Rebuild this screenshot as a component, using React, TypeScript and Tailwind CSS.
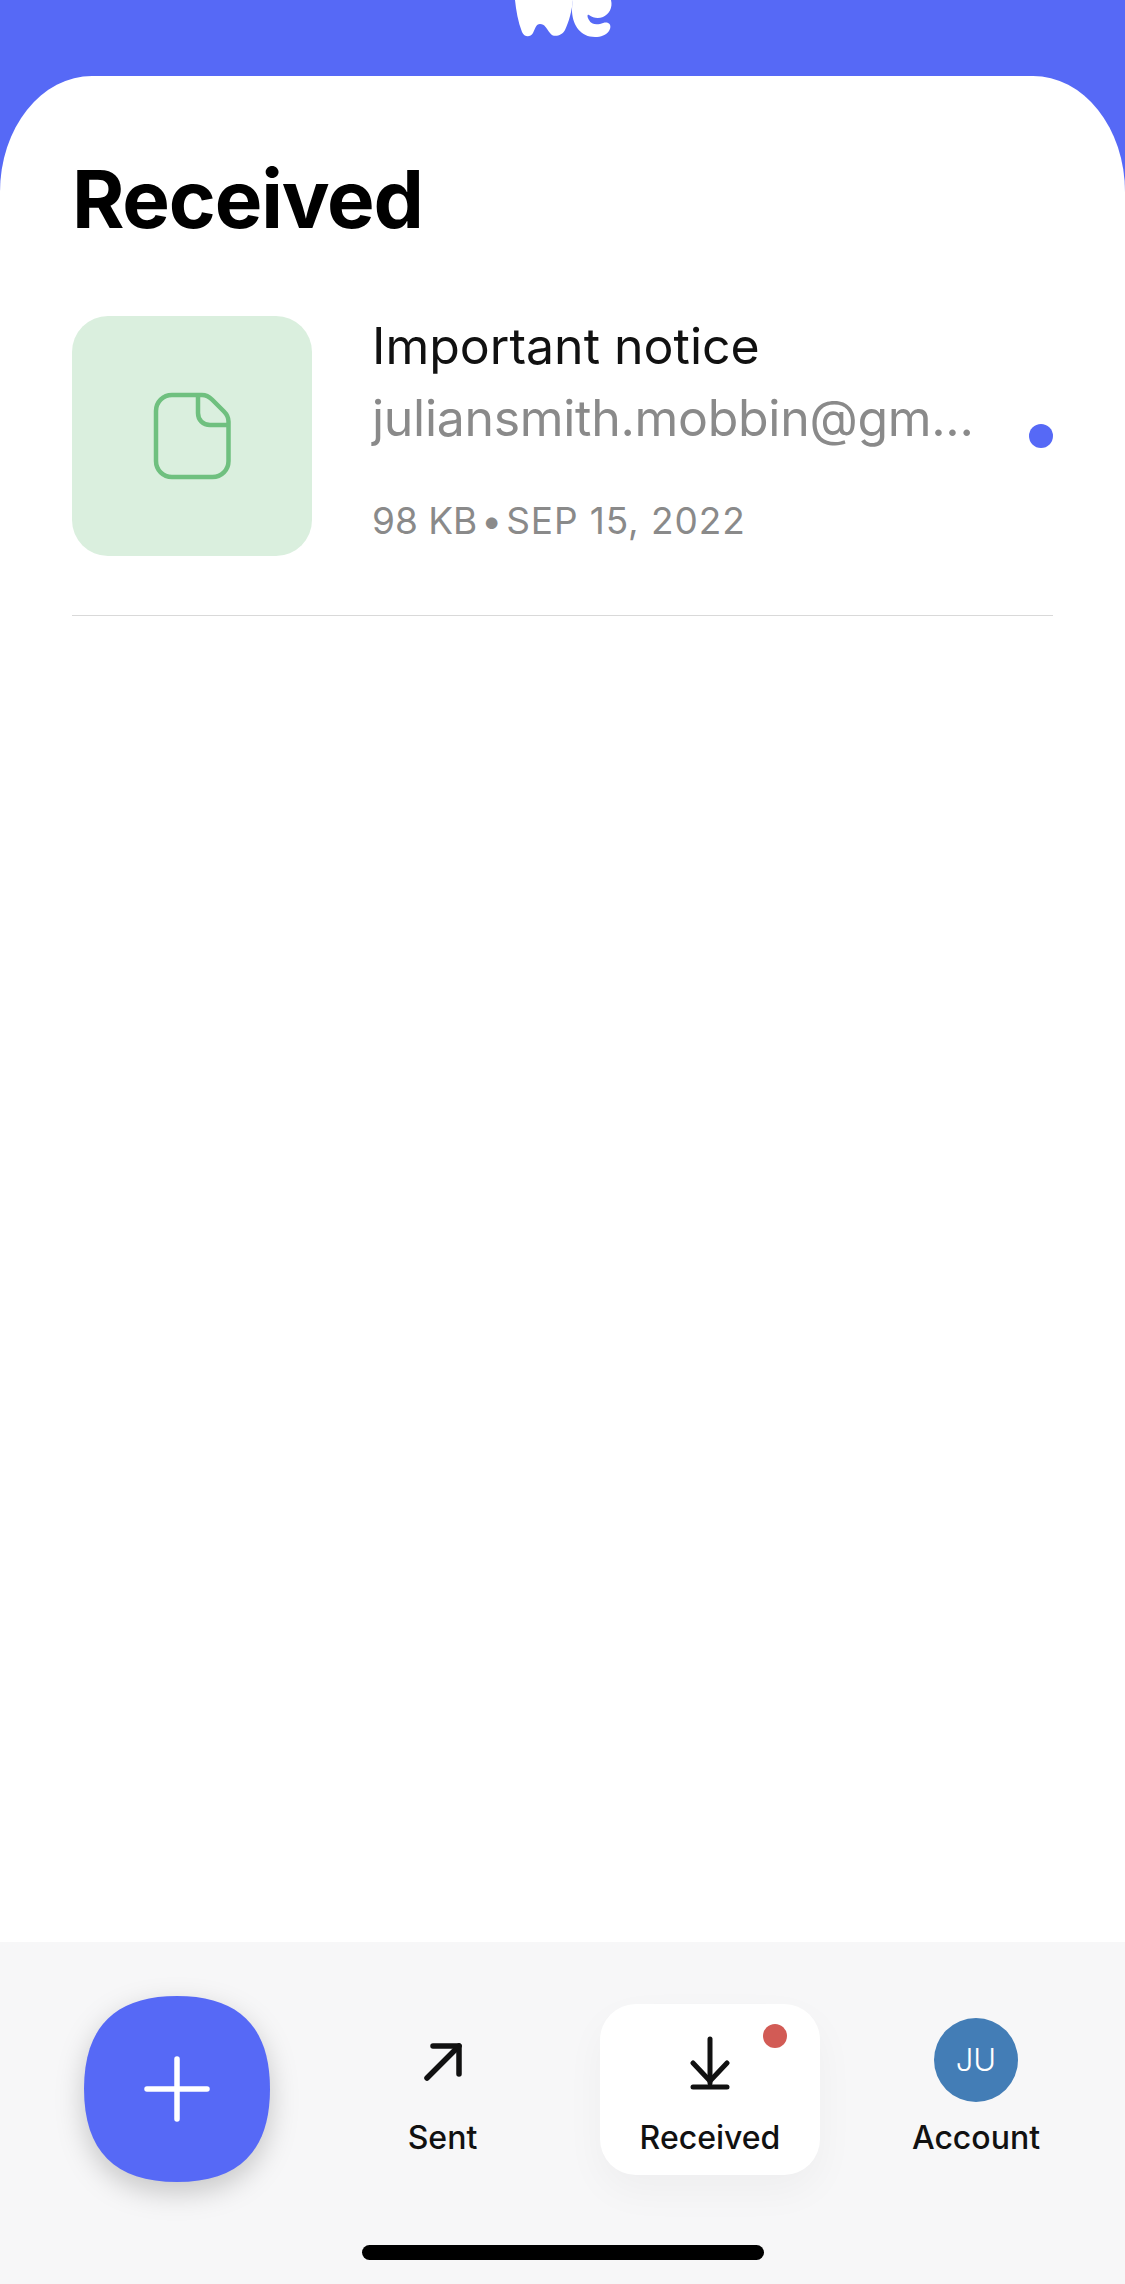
const sans = 'font-["Inter",sans-serif]';

function FileIcon() {
  return (
    <svg width="80" height="92" viewBox="0 0 80 92" fill="none" stroke="#6fc07f" strokeWidth="4.5">
      <path d="M20 4h30c4 0 7 1.500 10 4.500l12 12c3 3 4.500 6 4.500 10V70c0 9-7 16-16 16H20c-9 0-16-7-16-16V20C4 11 11 4 20 4Z" transform="translate(0 1)" />
      <path d="M46 5v18c0 7 5 12 12 12h18" />
    </svg>
  );
}

// WeTransfer mark, the top of it is cut off by the screen edge
function Logo() {
  return (
    <svg width="98" height="37" viewBox="0 0 98 37" fill="#fff">
      <path d="M0 0H58C57 10 54 22 50 30C47 36 38 38 35 33C31 28 30 24 25 24C21 24 20 29 18 33C15 38 9 37 7 32C3 22 1 10 0 0Z" />
      <path d="M58 0H96C98 8 94 14 88 17C83 19 78 18 74 15C72 14 72 17 74 20C76 24 80 25 85 24C88 23 91 22 93 23C96 24 96 28 94 31C91 35 86 37 80 37C66 37 58 26 57 12C57 8 57 4 58 0Z" />
    </svg>
  );
}

function AddButton() {
  return (
    <button className="ml-[84px] h-[186px] w-[186px] shrink-0">
      <svg width="186" height="186" viewBox="0 0 186 186" className="overflow-visible drop-shadow-[0_10px_14px_rgba(0,0,0,0.2)]">
        <path d="M93 0C155 0 186 31 186 93S155 186 93 186 0 155 0 93 31 0 93 0Z" fill="#5669f6" />
        <path d="M93 63v60M63 93h60" stroke="#fff" strokeWidth="5.500" strokeLinecap="round" />
      </svg>
    </button>
  );
}

function TabLabel({ children }: { children: string }) {
  return <span className="text-[32px] leading-[40px] font-medium whitespace-nowrap text-[#111]">{children}</span>;
}

export default function App() {
  return (
    <div className={`${sans} flex h-[2284px] flex-col overflow-hidden bg-[#5669f6]`}>
      <header className="flex h-[76px] shrink-0 justify-center pl-[2px]">
        <Logo />
      </header>

      <main className="flex-1 rounded-t-[92px_116px] bg-white px-[72px] pt-[79px]">
        <h1 className="text-[80px] leading-[88px] font-bold tracking-[-1.2px] text-black">Received</h1>

        <div className="mt-[73px] flex items-center border-b border-[#d9d9d9] pb-[59px]">
          <div className="flex h-[240px] w-[240px] shrink-0 items-center justify-center rounded-[36px] bg-[#daefde]">
            <FileIcon />
          </div>
          <div className="ml-[60px] min-w-0 flex-1 self-start">
            <p className="text-[50px] leading-[60px] text-[#111]">Important notice</p>
            <p className="mt-[6px] text-[50px] leading-[72px] tracking-[-0.3px] whitespace-nowrap text-[#8a8a8a]">juliansmith.mobbin@gm...</p>
            <p className="mt-[43px] flex gap-[4px] text-[37px] leading-[48px] text-[#8a8a8a]">
              <span>98 KB</span>
              <span>•</span>
              <span className="tracking-[0.9px]">SEP 15, 2022</span>
            </p>
          </div>
          <span className="h-[24px] w-[24px] shrink-0 rounded-full bg-[#5669f6]" />
        </div>
      </main>

      <nav className="relative h-[342px] shrink-0 bg-[#f7f7f8]">
        <div className="flex h-full items-start pt-[54px]">
          <AddButton />

          <div className="ml-[137px] flex w-[71px] shrink-0 flex-col items-center pt-[46px]">
            <svg width="40" height="40" viewBox="0 0 40 40" fill="none" stroke="#111" strokeWidth="5.500" strokeLinecap="round" strokeLinejoin="round">
              <path d="M4 36 36 4" />
              <path d="M10 4h26v28" />
            </svg>
            <div className="mt-[36px]"><TabLabel>Sent</TabLabel></div>
          </div>

          <div className="relative mt-[8px] ml-[122px] flex h-[171px] w-[220px] shrink-0 flex-col items-center rounded-[36px] bg-white pt-[32px] shadow-[0_16px_40px_rgba(0,0,0,0.04)]">
            <svg width="40" height="54" viewBox="0 0 40 54" fill="none" stroke="#111" strokeWidth="5" strokeLinecap="round" strokeLinejoin="round">
              <path d="M20 3v44" />
              <path d="M3 27l17 18 17-18" />
              <path d="M3 51h34" />
            </svg>
            <div className="mt-[28px]"><TabLabel>Received</TabLabel></div>
            <span className="absolute top-[20px] right-[33px] h-[24px] w-[24px] rounded-full bg-[#d25b55]" />
          </div>

          <div className="ml-[92px] flex w-[128px] shrink-0 flex-col items-center pt-[22px]">
            <div className="flex h-[84px] w-[84px] items-center justify-center rounded-full bg-[#437db6] text-[31px] font-light text-white">JU</div>
            <div className="mt-[16px]"><TabLabel>Account</TabLabel></div>
          </div>
        </div>
        <div className="absolute bottom-[24px] left-[362px] h-[15px] w-[402px] rounded-full bg-black" />
      </nav>
    </div>
  );
}
